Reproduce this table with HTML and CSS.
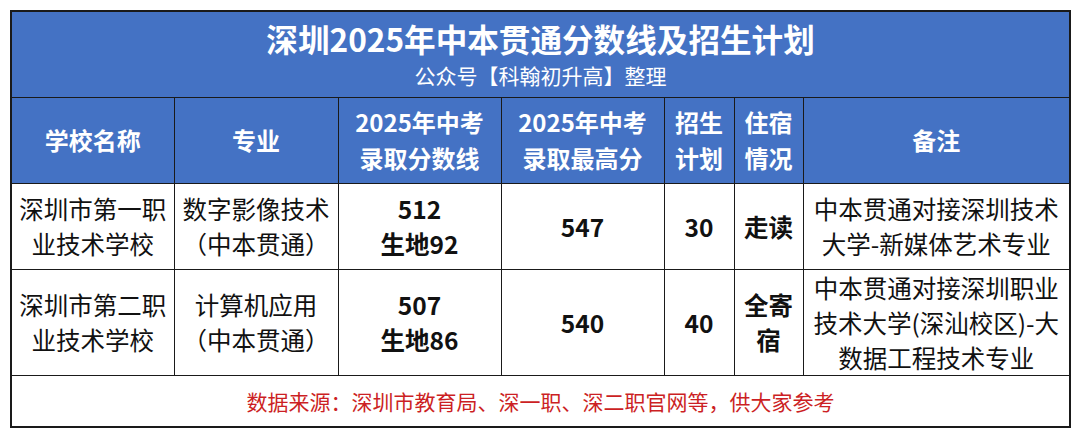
FILE: index.html
```html
<!DOCTYPE html>
<html lang="zh-CN">
<head>
<meta charset="utf-8">
<title>深圳2025年中本贯通分数线及招生计划</title>
<link rel="stylesheet" href="styles.css">
</head>
<body>
<table class="sheet">
  <colgroup>
    <col class="c-school">
    <col class="c-major">
    <col class="c-line">
    <col class="c-max">
    <col class="c-plan">
    <col class="c-dorm">
    <col class="c-note">
  </colgroup>
  <tr class="r-title">
    <td colspan="7" class="head">
      <div class="title">深圳2025年中本贯通分数线及招生计划</div>
      <div class="subtitle">公众号【科翰初升高】整理</div>
    </td>
  </tr>
  <tr class="r-head">
    <th>学校名称</th>
    <th>专业</th>
    <th>2025年中考<br>录取分数线</th>
    <th>2025年中考<br>录取最高分</th>
    <th>招生<br>计划</th>
    <th>住宿<br>情况</th>
    <th>备注</th>
  </tr>
  <tr class="r-1">
    <td>深圳市第一职<br>业技术学校</td>
    <td>数字影像技术<br>（中本贯通）</td>
    <td class="b">512<br>生地92</td>
    <td class="b">547</td>
    <td class="b">30</td>
    <td class="b">走读</td>
    <td>中本贯通对接深圳技术<br>大学-新媒体艺术专业</td>
  </tr>
  <tr class="r-2">
    <td>深圳市第二职<br>业技术学校</td>
    <td>计算机应用<br>（中本贯通）</td>
    <td class="b">507<br>生地86</td>
    <td class="b">540</td>
    <td class="b">40</td>
    <td class="b">全寄<br>宿</td>
    <td>中本贯通对接深圳职业<br>技术大学(深汕校区)-大<br>数据工程技术专业</td>
  </tr>
  <tr class="r-foot">
    <td colspan="7" class="source">数据来源：深圳市教育局、深一职、深二职官网等，供大家参考</td>
  </tr>
</table>
</body>
</html>
```

FILE: styles.css
```css
html, body {
  margin: 0;
  padding: 0;
  background: #ffffff;
}

body {
  font-family: "Noto Sans CJK SC", "Noto Sans", sans-serif;
  color: #111111;
}

.sheet {
  margin: 10px 0 0 10px;
  width: 1059px;
  table-layout: fixed;
  border-collapse: collapse;
  border: 2px solid #1a1a1a;
}

.c-school { width: 163px; }
.c-major { width: 164px; }
.c-line { width: 163px; }
.c-max { width: 163px; }
.c-plan { width: 70px; }
.c-dorm { width: 69px; }
.c-note { width: 267px; }

.sheet td,
.sheet th {
  border: 1.5px solid #1a1a1a;
  padding: 0;
  text-align: center;
  vertical-align: middle;
  font-size: 24.5px;
  line-height: 35px;
  white-space: nowrap;
}

.r-title { height: 86px; }
.r-head { height: 86px; }
.r-1 { height: 86px; }
.r-2 { height: 105px; }
.r-foot { height: 52px; }

.sheet .head {
  background: #4472c4;
  color: #ffffff;
  vertical-align: top;
}

.title {
  padding-top: 5px;
  font-size: 31.6px;
  line-height: 42px;
  font-weight: 700;
}

.subtitle {
  margin-top: 3px;
  font-size: 21px;
  line-height: 26px;
  font-weight: 400;
}

.sheet .r-head th {
  background: #4472c4;
  color: #ffffff;
  font-weight: 700;
  font-size: 24px;
  line-height: 36px;
}

.sheet .b {
  font-weight: 700;
}

.sheet .source {
  color: #cc1f24;
  font-size: 21px;
  line-height: 28px;
}
```
